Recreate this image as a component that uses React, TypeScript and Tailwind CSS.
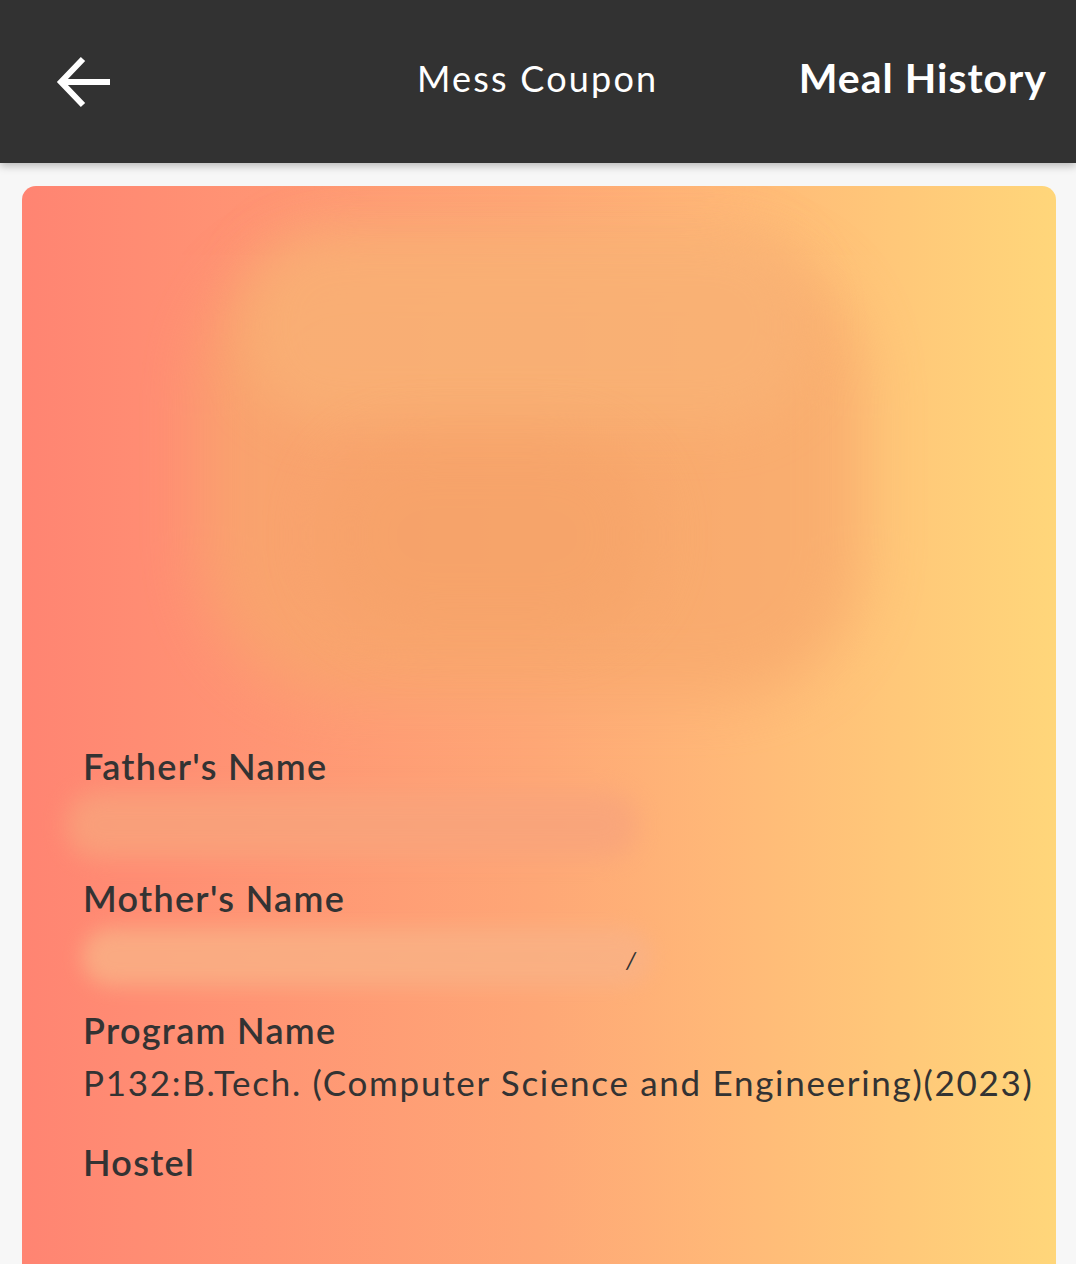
import React from "react";

export default function App() {
  return (
    <div className="w-[1076px] h-[1264px] overflow-hidden bg-[#f7f7f7] relative" style={{ fontFamily: "Lato, 'Open Sans', sans-serif" }}>
      <header className="h-[163px] bg-[#323232] flex items-center relative z-10 shadow-[0_3px_8px_rgba(0,0,0,0.25)]">
        <div className="pl-[56px] w-[360px] flex items-center">
          <svg width="56" height="52" viewBox="0 0 56 52" fill="none" stroke="white" strokeWidth="6" strokeLinecap="butt" strokeLinejoin="miter">
            <path d="M54 26 H6" />
            <path d="M27 3 L5 26 L27 49" />
          </svg>
        </div>
        <div className="ml-[57px] text-white text-[36px] tracking-[2.2px] mb-[8px]">Mess Coupon</div>
        <div className="ml-auto mr-[29px] text-white text-[41px] font-bold tracking-[1px] mb-[8px]">Meal History</div>
      </header>
      <main className="pl-[22px] pr-[20px] pt-[23px]">
        <div className="relative rounded-[14px] h-[1120px] bg-gradient-to-r from-[#ff8472] via-[#fea776] to-[#ffd67a] overflow-hidden">
          <div className="absolute left-[180px] top-[60px] w-[660px] h-[450px] rounded-[140px] bg-[#f7a86c] opacity-75 blur-[30px]" />
          <div className="absolute left-[220px] top-[40px] w-[570px] h-[200px] rounded-[90px] bg-[#f9b578] opacity-60 blur-[25px]" />
          <div className="absolute left-[300px] top-[250px] w-[330px] h-[200px] rounded-[90px] bg-[#f4a065] opacity-40 blur-[30px]" />
          <div className="absolute left-[45px] top-[606px] w-[570px] h-[66px] rounded-[30px] bg-[#f8a47c] opacity-80 blur-[12px]" />
          <div className="absolute left-[60px] top-[742px] w-[570px] h-[58px] rounded-[30px] bg-[#f9b286] opacity-80 blur-[10px]" />
          <div className="absolute left-[604px] top-[756px] text-[#333] text-[24px] italic">/</div>
          <div className="relative pl-[61px] pt-[556px] text-[#333] flex flex-col">
            <div className="text-[36px] font-semibold leading-[48px] tracking-[1.3px]">Father's Name</div>
            <div className="h-[84px]" />
            <div className="text-[36px] font-semibold leading-[48px] tracking-[1.3px]">Mother's Name</div>
            <div className="h-[84px]" />
            <div className="text-[36px] font-semibold leading-[48px] tracking-[1.3px]">Program Name</div>
            <div className="text-[35px] leading-[48px] mt-[4px] tracking-[1.7px] whitespace-nowrap">P132:B.Tech. (Computer Science and Engineering)(2023)</div>
            <div className="text-[36px] font-semibold leading-[48px] mt-[32px] tracking-[1.3px]">Hostel</div>
          </div>
        </div>
      </main>
    </div>
  );
}
